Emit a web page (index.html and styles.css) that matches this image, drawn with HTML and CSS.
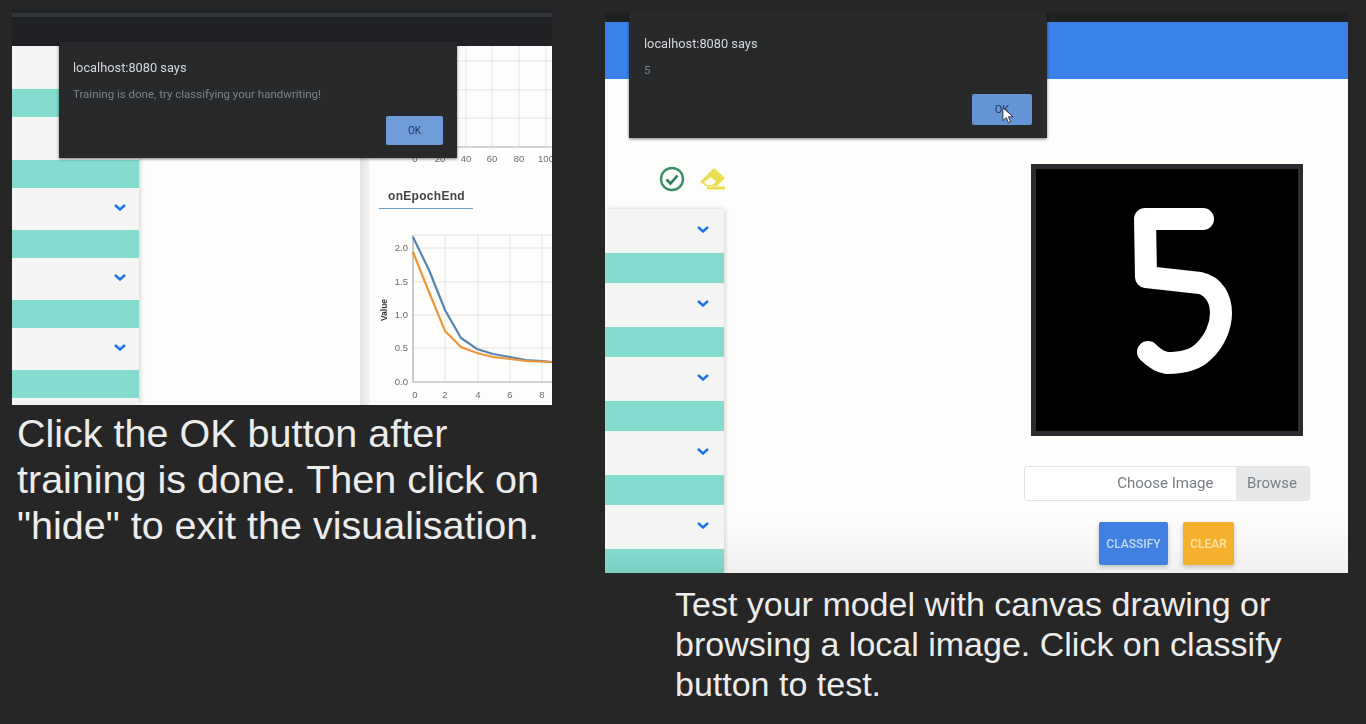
FILE: index.html
```html
<!DOCTYPE html>
<html lang="en">
<head>
    <meta charset="UTF-8">
    <title>Test your model</title>
    <link rel="stylesheet" href="styles.css">
</head>
<body>
    <div class="slide">
        <div class="col-left">
            <div class="shot shot-left">
                <div class="dark-bar"><div class="dark-stripe"></div></div>
                <div class="page">
                    <div class="side side-left">
                        <div class="row row-tall"></div>
                        <div class="band"></div>
                        <div class="row row-tall"></div>
                        <div class="band"></div>
                        <div class="row"><svg class="chev" viewBox="0 0 12 7"><path d="M1 1l5 4.5L11 1"/></svg></div>
                        <div class="band"></div>
                        <div class="row"><svg class="chev" viewBox="0 0 12 7"><path d="M1 1l5 4.5L11 1"/></svg></div>
                        <div class="band"></div>
                        <div class="row"><svg class="chev" viewBox="0 0 12 7"><path d="M1 1l5 4.5L11 1"/></svg></div>
                        <div class="band"></div>
                        <div class="row"></div>
                    </div>
                    <div class="divider"></div>
                    <div class="charts">
                        <svg class="chart-top" viewBox="0 0 182 120">
                            <g class="grid">
                                <path d="M45 15H182M45 44H182M45 72H182"/>
                                <path d="M96 0V101M122 0V101M149 0V101M176 0V101"/>
                            </g>
                            <path class="axis" d="M45 101H182"/>
                            <g class="tick">
                                <text x="45" y="116">0</text>
                                <text x="70" y="116">20</text>
                                <text x="96" y="116">40</text>
                                <text x="122" y="116">60</text>
                                <text x="149" y="116">80</text>
                                <text x="176" y="116">100</text>
                            </g>
                        </svg>
                        <div class="chart-title">onEpochEnd</div>
                        <svg class="chart-bottom" viewBox="0 0 182 175">
                            <g class="grid">
                                <path d="M43 5H182M43 18H182M43 52H182M43 85H182M43 118H182"/>
                                <path d="M75 5V152M108 5V152M140 5V152M172 5V152"/>
                            </g>
                            <path class="axis" d="M43 5V152H182"/>
                            <g class="tick">
                                <text class="tick-y" x="38" y="21">2.0</text>
                                <text class="tick-y" x="38" y="55">1.5</text>
                                <text class="tick-y" x="38" y="88">1.0</text>
                                <text class="tick-y" x="38" y="121">0.5</text>
                                <text class="tick-y" x="38" y="155">0.0</text>
                                <text x="45" y="168">0</text>
                                <text x="75" y="168">2</text>
                                <text x="108" y="168">4</text>
                                <text x="140" y="168">6</text>
                                <text x="172" y="168">8</text>
                            </g>
                            <text class="axis-name" transform="translate(17 80) rotate(-90)">Value</text>
                            <polyline class="line-blue" points="43,7 59,40 75,80 91,108 107,119 123,124 140,127 156,130 172,131 182,132"/>
                            <polyline class="line-orange" points="43,22 59,62 75,101 91,117 107,123 123,127 140,129 156,131 182,132"/>
                        </svg>
                    </div>
                </div>
                <div class="dialog dialog-left">
                    <div class="dialog-title">localhost:8080 says</div>
                    <div class="dialog-msg">Training is done, try classifying your handwriting!</div>
                    <button class="dialog-ok">OK</button>
                </div>
            </div>
            <p class="caption caption-left">Click the OK button after training is done. Then click on "hide" to exit the visualisation.</p>
        </div>

        <div class="col-right">
            <div class="shot shot-right">
                <div class="dark-bar-thin"></div>
                <div class="blue-header"></div>
                <div class="page page-right">
                    <div class="side-wrap">
                        <div class="tools">
                            <svg class="tool" width="26" height="26" viewBox="0 0 26 26">
                                <circle cx="13" cy="13" r="11" fill="none" stroke="#3c8f6c" stroke-width="2.4"/>
                                <path d="M7.500 13.500l4 4 7-8" fill="none" stroke="#2f7f5d" stroke-width="2.600"/>
                            </svg>
                            <svg class="tool" width="27" height="24" viewBox="0 0 27 24">
                                <path fill="#e9df4e" d="M15 1l11 10-8 8H7l-6-4z"/>
                                <path fill="#fdfdf5" d="M5 15l7-5 5 5-4 3H8z"/>
                                <path fill="#e9df4e" d="M8 19.500h18v3H8z"/>
                            </svg>
                        </div>
                        <div class="side side-right">
                            <div class="row"><svg class="chev" viewBox="0 0 12 7"><path d="M1 1l5 4.5L11 1"/></svg></div>
                            <div class="band"></div>
                            <div class="row"><svg class="chev" viewBox="0 0 12 7"><path d="M1 1l5 4.5L11 1"/></svg></div>
                            <div class="band"></div>
                            <div class="row"><svg class="chev" viewBox="0 0 12 7"><path d="M1 1l5 4.5L11 1"/></svg></div>
                            <div class="band"></div>
                            <div class="row"><svg class="chev" viewBox="0 0 12 7"><path d="M1 1l5 4.5L11 1"/></svg></div>
                            <div class="band"></div>
                            <div class="row"><svg class="chev" viewBox="0 0 12 7"><path d="M1 1l5 4.5L11 1"/></svg></div>
                            <div class="band band-last"></div>
                        </div>
                    </div>
                    <div class="main">
                        <svg class="canvas" viewBox="5 5 262 262">
                            <path d="M172 55H114L115 113 169 119C183 122 190 135 190 149 190 162 184 177 172 188 163 197 150 199 136 199 128 198 122 193 117 188" fill="none" stroke="#fff" stroke-width="22" stroke-linecap="round" stroke-linejoin="round"/>
                        </svg>
                        <div class="file-input">
                            <div class="file-label">Choose Image</div>
                            <div class="file-browse">Browse</div>
                        </div>
                        <div class="actions">
                            <button class="btn btn-blue">CLASSIFY</button>
                            <button class="btn btn-amber">CLEAR</button>
                        </div>
                    </div>
                </div>
                <div class="dialog dialog-right">
                    <div class="dialog-title">localhost:8080 says</div>
                    <div class="dialog-msg">5</div>
                    <button class="dialog-ok">OK</button>
                    <svg class="cursor" width="12" height="17" viewBox="0 0 14 20">
                        <path d="M1 1v15l4-3.500 2.500 6 2.500-1-2.500-6H13z" fill="#fff" stroke="#222" stroke-width="1"/>
                    </svg>
                </div>
            </div>
            <p class="caption caption-right">Test your model with canvas drawing or browsing a local image. Click on classify button to test.</p>
        </div>
    </div>
</body>
</html>
```

FILE: styles.css
```css
body {
    margin: 0;
    background: #262626;
    font-family: "Liberation Sans", Arial, sans-serif;
    overflow: hidden;
}
.slide {
    display: flex;
    align-items: flex-start;
    width: 1366px;
    height: 724px;
    padding: 9px 0 0 12px;
    box-sizing: border-box;
}
.col-left {
    width: 540px;
}
.col-right {
    width: 743px;
    margin-left: 53px;
    padding-top: 3px;
}
.shot {
    position: relative;
    overflow: hidden;
    background: #fdfdfb;
    filter: blur(0.45px);
}
.shot-left {
    height: 396px;
}
.shot-right {
    height: 561px;
}

/* top of the recorded browser */
.dark-bar {
    height: 37px;
    background: #202124;
    padding-top: 4px;
    box-sizing: border-box;
}
.dark-stripe {
    height: 4px;
    background: #33363a;
}
.dark-bar-thin {
    height: 10px;
    background: #202124;
}
.blue-header {
    height: 57px;
    background: #3a82ea;
}

.page {
    display: flex;
}
.page-right {
    height: 494px;
    background: linear-gradient(#fdfdfb 440px, #f0f0ef);
}

/* accordion rows */
.side {
    display: flex;
    flex-direction: column;
    box-shadow: 1px 0 5px rgba(0, 0, 0, 0.18);
}
.side-left {
    width: 127px;
    height: 359px;
    overflow: hidden;
    flex-shrink: 0;
}
.side-right {
    width: 119px;
    height: 364px;
    border-radius: 3px 3px 0 0;
}
.row {
    flex: 0 0 42px;
    box-sizing: border-box;
    display: flex;
    align-items: center;
    justify-content: flex-end;
    padding: 0 13px 4px 0;
    background: #f4f4f3;
}
.row-tall {
    flex-basis: 43px;
}
.side-right .row {
    flex-basis: 44px;
    padding-right: 15px;
}
.band {
    flex: 0 0 28px;
    background: #84dccf;
}
.side-right .band {
    flex-basis: 30px;
}
.side-right .band-last {
    flex-basis: 25px;
    background: linear-gradient(#84dccf, #78cfc2);
}
.chev {
    width: 12px;
    height: 7px;
    fill: none;
    stroke: #1a73e8;
    stroke-width: 2.4;
}

/* right hand charts in first shot */
.divider {
    width: 10px;
    margin-left: 221px;
    background: linear-gradient(90deg, #e2e2e0, #f6f6f4);
    flex-shrink: 0;
}
.charts {
    width: 182px;
    flex-shrink: 0;
}
.charts svg {
    display: block;
    width: 182px;
}
.chart-top {
    height: 120px;
}
.chart-bottom {
    height: 175px;
}
.chart-title {
    width: 85px;
    margin: 0 0 21px 9px;
    padding: 23px 0 5px 9px;
    border-bottom: 1px solid #6a9fc8;
    font-size: 12px;
    line-height: 14px;
    font-weight: bold;
    letter-spacing: 0.3px;
    color: #444;
}
.grid path {
    fill: none;
    stroke: #e3e3e1;
    stroke-width: 1;
}
.axis {
    fill: none;
    stroke: #a9a9a9;
    stroke-width: 1.2;
}
.tick text {
    font-size: 9.5px;
    fill: #6b6b6b;
    text-anchor: middle;
}
.tick .tick-y {
    text-anchor: end;
}
.axis-name {
    font-size: 8.5px;
    font-weight: bold;
    fill: #333;
    text-anchor: middle;
}
.line-blue,
.line-orange {
    fill: none;
    stroke-width: 2.2;
}
.line-blue {
    stroke: #5b84ad;
}
.line-orange {
    stroke: #ed9538;
}

/* alert boxes */
.dialog {
    position: absolute;
    background: #27292b;
    box-shadow: 0 1px 3px rgba(0, 0, 0, 0.5);
    font-family: Roboto, sans-serif;
    box-sizing: border-box;
}
.dialog-left {
    left: 47px;
    top: 33px;
    width: 398px;
    height: 116px;
    padding: 18px 14px;
}
.dialog-right {
    left: 24px;
    top: 0;
    width: 418px;
    height: 126px;
    padding: 24px 15px;
}
.dialog-title {
    font-size: 12.8px;
    line-height: 16px;
    color: #d4d6d8;
}
.dialog-msg {
    margin-top: 11px;
    font-size: 11.5px;
    line-height: 14px;
    color: #7d8286;
}
.dialog-ok {
    position: absolute;
    width: 57px;
    height: 29px;
    border: none;
    border-radius: 2px;
    background: #6f9bd8;
    color: #1f3a66;
    font-family: Roboto, sans-serif;
    font-size: 10px;
    padding: 0;
}
.dialog-left .dialog-ok {
    right: 14px;
    bottom: 13px;
}
.dialog-right .dialog-ok {
    width: 60px;
    height: 31px;
    right: 15px;
    bottom: 13px;
    background: #6595d6;
    font-size: 11px;
}
.cursor {
    position: absolute;
    left: 373px;
    top: 95px;
}

/* first shot, tools and main column */
.side-wrap {
    width: 119px;
    flex-shrink: 0;
}
.tools {
    display: flex;
    align-items: center;
    gap: 14px;
    width: 119px;
    height: 130px;
    padding: 88px 0 18px 54px;
    box-sizing: border-box;
    white-space: nowrap;
}
.tool {
    flex-shrink: 0;
}
.main {
    display: flex;
    flex-direction: column;
    align-items: center;
    width: 363px;
    margin-left: 261px;
    padding-top: 85px;
    box-sizing: border-box;
}
.canvas {
    width: 272px;
    height: 272px;
    box-sizing: border-box;
    background: #000;
    border: 5px solid #2a2d2f;
    flex-shrink: 0;
}
.file-input {
    display: flex;
    width: 286px;
    height: 35px;
    margin-top: 30px;
    border: 1px solid #e1e3e5;
    border-radius: 3px;
    box-sizing: border-box;
    font-family: Roboto, sans-serif;
    font-size: 15px;
    line-height: 33px;
    color: #7a7f84;
    background: #fff;
}
.file-label {
    flex: 1;
    text-align: right;
    padding-right: 22px;
}
.file-browse {
    width: 73px;
    text-align: center;
    background: #e6e8ea;
}
.actions {
    display: flex;
    gap: 15px;
    margin-top: 21px;
}
.btn {
    height: 43px;
    border: none;
    border-radius: 2px;
    padding: 0;
    font-family: Roboto, sans-serif;
    font-size: 12px;
    font-weight: 500;
    box-shadow: 0 2px 5px rgba(0, 0, 0, 0.22);
}
.btn-blue {
    width: 69px;
    background: #3f80e0;
    color: #c5d9f5;
}
.btn-amber {
    width: 51px;
    background: #f5b02e;
    color: #fbe3a8;
}

/* captions under the shots */
.caption {
    margin: 0;
    color: #ececec;
}
.caption-left {
    width: 535px;
    margin-top: 5px;
    padding-left: 5px;
    font-size: 39.5px;
    line-height: 46px;
}
.caption-right {
    width: 640px;
    margin-top: 11px;
    margin-left: 70px;
    font-size: 34px;
    line-height: 40px;
}
```
